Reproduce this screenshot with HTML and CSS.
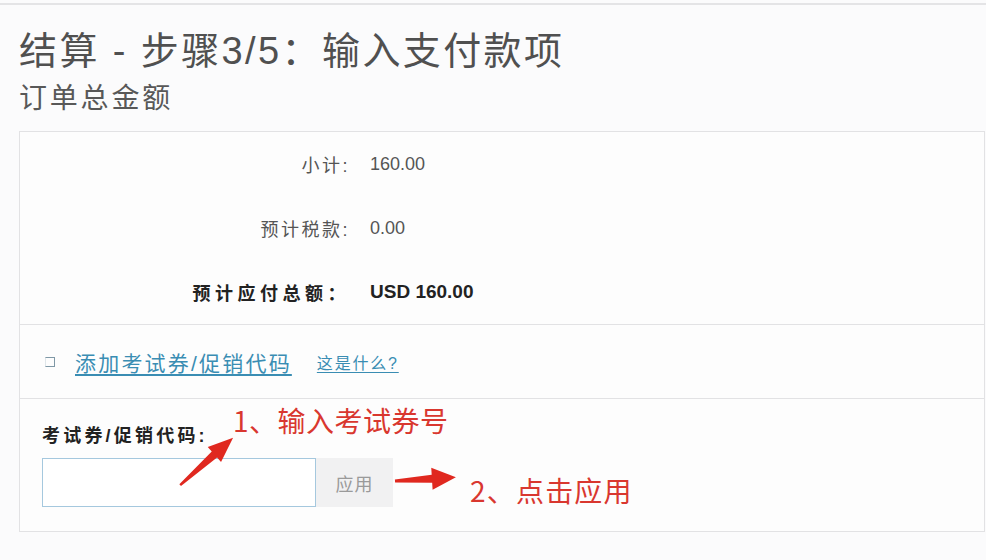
FILE: index.html
```html
<!DOCTYPE html>
<html lang="zh-CN">
<head>
    <meta charset="UTF-8">
    <meta name="viewport" content="width=device-width, initial-scale=1.0">
    <title>结算 - 步骤3/5</title>
    <link rel="stylesheet" href="styles.css">
</head>
<body>
    <div class="page">
        <div class="top-rule"></div>

        <header class="checkout-header">
            <h1 class="checkout-title">结算 - 步骤3/5：输入支付款项</h1>
            <h2 class="checkout-subtitle">订单总金额</h2>
        </header>

        <section class="order-box">
            <!-- Totals -->
            <div class="summary">
                <div class="summary-row">
                    <span class="summary-label">小计:</span>
                    <span class="summary-value">160.00</span>
                </div>
                <div class="summary-row">
                    <span class="summary-label">预计税款:</span>
                    <span class="summary-value">0.00</span>
                </div>
                <div class="summary-row total">
                    <span class="summary-label">预计应付总额：</span>
                    <span class="summary-value">USD 160.00</span>
                </div>
            </div>

            <!-- Promo toggle -->
            <div class="promo-toggle">
                <span class="checkbox"></span>
                <a href="#" class="promo-link">添加考试券/促销代码</a>
                <a href="#" class="help-link">这是什么?</a>
            </div>

            <!-- Promo form -->
            <div class="promo-form">
                <label class="promo-label" for="promo-input">考试券/促销代码:</label>
                <div class="promo-controls">
                    <input type="text" id="promo-input" class="promo-input">
                    <button class="apply-btn">应用</button>
                </div>
            </div>
        </section>

        <!-- Annotations drawn over the screenshot -->
        <div class="note note-1">1、输入考试券号</div>
        <div class="note note-2">2、点击应用</div>
        <svg class="arrows" width="986" height="560" viewBox="0 0 986 560">
            <polygon class="arrow" points="0,-1 46,-4 46,-10 71,0 46,10 46,4 0,1.5"
                transform="translate(180 482) rotate(-41.6)"/>
            <polygon class="arrow" points="0,-1.5 37,-4 37,-11 61,0 37,11 37,4 0,1.5"
                transform="translate(395 478) rotate(-3.5)"/>
        </svg>
    </div>
</body>
</html>
```

FILE: styles.css
```css
* {
    margin: 0;
    padding: 0;
    box-sizing: border-box;
}

body {
    font-family: 'Liberation Sans', 'Noto Sans CJK SC', sans-serif;
    background-color: #fbfbfc;
    color: #555;
    width: 986px;
    height: 560px;
    overflow: hidden;
}

.page {
    position: relative;
    height: 560px;
}

.top-rule {
    height: 2px;
    margin-top: 3px;
    background-color: #e4e4e6;
}

.checkout-header {
    padding-left: 19px;
}

.checkout-title {
    font-size: 38px;
    font-weight: 400;
    line-height: 46px;
    color: #505050;
    margin-top: 23px;
    letter-spacing: 2.4px;
}

.checkout-subtitle {
    font-size: 28px;
    font-weight: 400;
    line-height: 34px;
    color: #585858;
    margin-top: 8px;
    letter-spacing: 2.8px;
}

.order-box {
    margin-top: 15px;
    margin-left: 19px;
    margin-right: 1px;
    border: 1px solid #e2e2e4;
    background-color: #fdfdfd;
}

.summary {
    border-bottom: 1px solid #e2e2e4;
}

.summary-row {
    display: flex;
    align-items: center;
    height: 64px;
    font-size: 18px;
}

.summary-label {
    width: 330px;
    text-align: right;
    letter-spacing: 2.5px;
    color: #555;
}

.summary-value {
    margin-left: 20px;
    color: #555;
}

.summary-row.total .summary-label {
    font-weight: 700;
    letter-spacing: 4.5px;
    color: #222;
}

.summary-row.total .summary-value {
    font-size: 19px;
    font-weight: 700;
    color: #222;
}

.promo-toggle {
    display: flex;
    align-items: center;
    height: 74px;
    padding-left: 25px;
    border-bottom: 1px solid #e2e2e4;
}

.checkbox {
    width: 10px;
    height: 10px;
    border: 1px solid #7f98a6;
    border-left-color: #dfe6ea;
    margin-right: 20px;
}

.promo-link {
    font-size: 21px;
    letter-spacing: 2.2px;
    color: #3a8db3;
    text-decoration: underline;
    text-underline-offset: 3px;
}

.help-link {
    margin-left: 25px;
    font-size: 16px;
    letter-spacing: 1.8px;
    color: #3a8db3;
    text-decoration: underline;
    text-underline-offset: 3px;
}

.promo-form {
    padding: 25px 22px 24px;
}

.promo-label {
    display: block;
    font-size: 18px;
    font-weight: 700;
    letter-spacing: 3.2px;
    line-height: 24px;
    color: #222;
}

.promo-controls {
    display: flex;
    margin-top: 10px;
}

.promo-input {
    width: 274px;
    height: 49px;
    border: 1px solid #a5c8de;
    background-color: #fff;
    outline: none;
}

.apply-btn {
    width: 77px;
    height: 49px;
    border: none;
    background-color: #f1f1f2;
    color: #9a9a9a;
    font-family: 'Noto Sans CJK SC', sans-serif;
    font-size: 18px;
    letter-spacing: 1px;
}

.note {
    position: absolute;
    font-family: 'Noto Sans CJK SC', sans-serif;
    color: #d9372f;
    line-height: 1;
    white-space: nowrap;
}

.note-1 {
    left: 233px;
    top: 403px;
    font-size: 28px;
    letter-spacing: 0.5px;
}

.note-2 {
    left: 470px;
    top: 473px;
    font-size: 28px;
    letter-spacing: 1.2px;
}

.arrows {
    position: absolute;
    left: 0;
    top: 0;
    pointer-events: none;
}

.arrow {
    fill: #e0281f;
}
```
